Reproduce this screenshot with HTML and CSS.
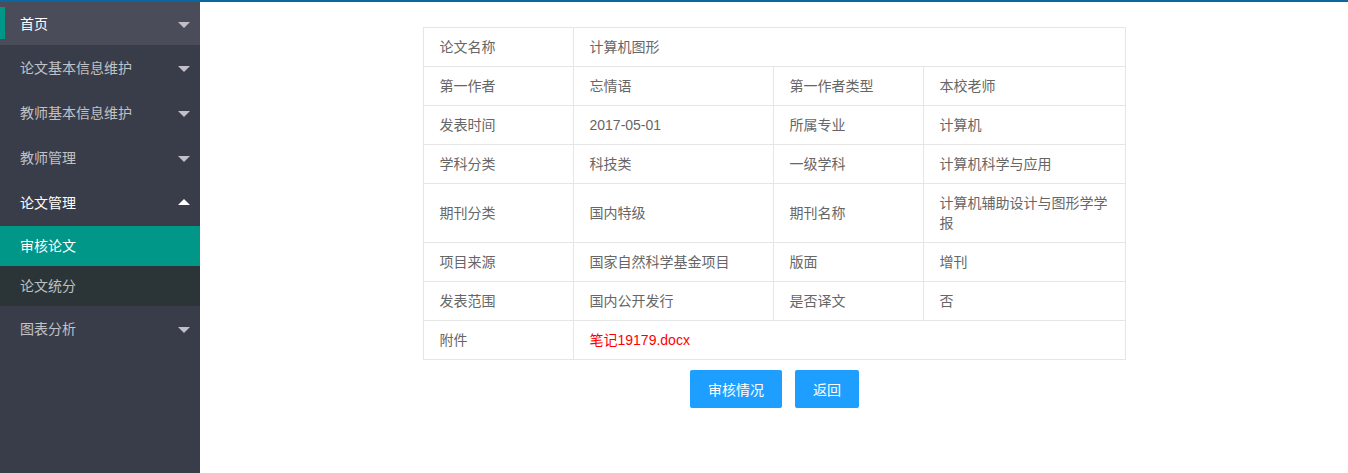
FILE: index.html
```html
<!DOCTYPE html>
<html lang="zh-CN">
<head>
<meta charset="utf-8">
<title>审核论文</title>
<link rel="stylesheet" href="styles.css">
</head>
<body>
<div class="layout">
  <aside class="side">
    <ul class="nav">
      <li class="nav-item hover current first"><span>首页</span><i class="arrow down"></i></li>
      <li class="nav-item"><span>论文基本信息维护</span><i class="arrow down"></i></li>
      <li class="nav-item"><span>教师基本信息维护</span><i class="arrow down"></i></li>
      <li class="nav-item"><span>教师管理</span><i class="arrow down"></i></li>
      <li class="nav-item open"><span>论文管理</span><i class="arrow up"></i></li>
      <li class="sub-item active">审核论文</li>
      <li class="sub-item">论文统分</li>
      <li class="nav-item"><span>图表分析</span><i class="arrow down"></i></li>
    </ul>
  </aside>
  <main class="main">
    <table class="info">
      <colgroup>
        <col class="c1"><col class="c2"><col class="c3"><col class="c4">
      </colgroup>
      <tr><td>论文名称</td><td colspan="3">计算机图形</td></tr>
      <tr><td>第一作者</td><td>忘情语</td><td>第一作者类型</td><td>本校老师</td></tr>
      <tr><td>发表时间</td><td>2017-05-01</td><td>所属专业</td><td>计算机</td></tr>
      <tr><td>学科分类</td><td>科技类</td><td>一级学科</td><td>计算机科学与应用</td></tr>
      <tr><td>期刊分类</td><td>国内特级</td><td>期刊名称</td><td>计算机辅助设计与图形学学报</td></tr>
      <tr><td>项目来源</td><td>国家自然科学基金项目</td><td>版面</td><td>增刊</td></tr>
      <tr><td>发表范围</td><td>国内公开发行</td><td>是否译文</td><td>否</td></tr>
      <tr><td>附件</td><td colspan="3"><a class="file" href="#">笔记19179.docx</a></td></tr>
    </table>
    <div class="actions">
      <button class="btn">审核情况</button>
      <button class="btn">返回</button>
    </div>
  </main>
</div>
</body>
</html>
```
FILE: styles.css
```css
* { box-sizing: border-box; }
html, body { margin: 0; padding: 0; }
body {
  font-family: "Liberation Sans", "Noto Sans CJK SC", sans-serif;
  font-size: 14px;
  color: #666;
  background: #fff;
  border-top: 2px solid #0b67a0;
  height: 473px;
  overflow: hidden;
}
.layout { display: flex; height: 471px; }
.side { width: 200px; flex: none; background: #393d49; }
.nav { list-style: none; margin: 0; padding: 0; }
.nav-item {
  position: relative;
  height: 45px;
  display: flex;
  align-items: center;
  justify-content: space-between;
  padding: 0 10px 2px 20px;
  color: rgba(255,255,255,.7);
}
.nav-item.first { height: 43px; }
.nav-item.hover { background: #4a4d59; color: #fff; }
.nav-item.current::before {
  content: "";
  position: absolute;
  left: 0; top: 5px;
  width: 5px; height: 32px;
  background: #009688;
}
.nav-item.open { color: #fff; }
.arrow { display: block; width: 0; height: 0; border: 6px solid transparent; }
.arrow.down { border-top-color: #c2bfc8; border-bottom-width: 0; margin-top: 5px; }
.arrow.up { border-bottom-color: #fff; border-top-width: 0; margin-top: 0; }
.sub-item {
  height: 40px;
  display: flex;
  align-items: center;
  padding: 0 0 2px 20px;
  background: #2b3436;
  color: rgba(255,255,255,.7);
}
.sub-item.active { background: #009688; color: #fff; margin-top: 1px; }
.main { flex: 1; display: flex; flex-direction: column; align-items: center; padding-top: 25px; padding-left: 1px; }
.info { width: 701px; border-collapse: collapse; table-layout: fixed; }
.c1 { width: 150px; } .c2 { width: 200px; } .c3 { width: 150px; } .c4 { width: 201px; }
.info td {
  border: 1px solid #e6e6e6;
  padding: 9px 15px;
  line-height: 20px;
  color: #666;
  vertical-align: middle;
}
.file { color: #f00; text-decoration: none; }
.actions { display: flex; gap: 13px; margin-top: 10px; }
.btn {
  height: 38px;
  padding: 0 18px;
  border: none;
  border-radius: 2px;
  background: #1e9fff;
  color: #fff;
  font-family: inherit;
  font-size: 14px;
  cursor: pointer;
}
```
